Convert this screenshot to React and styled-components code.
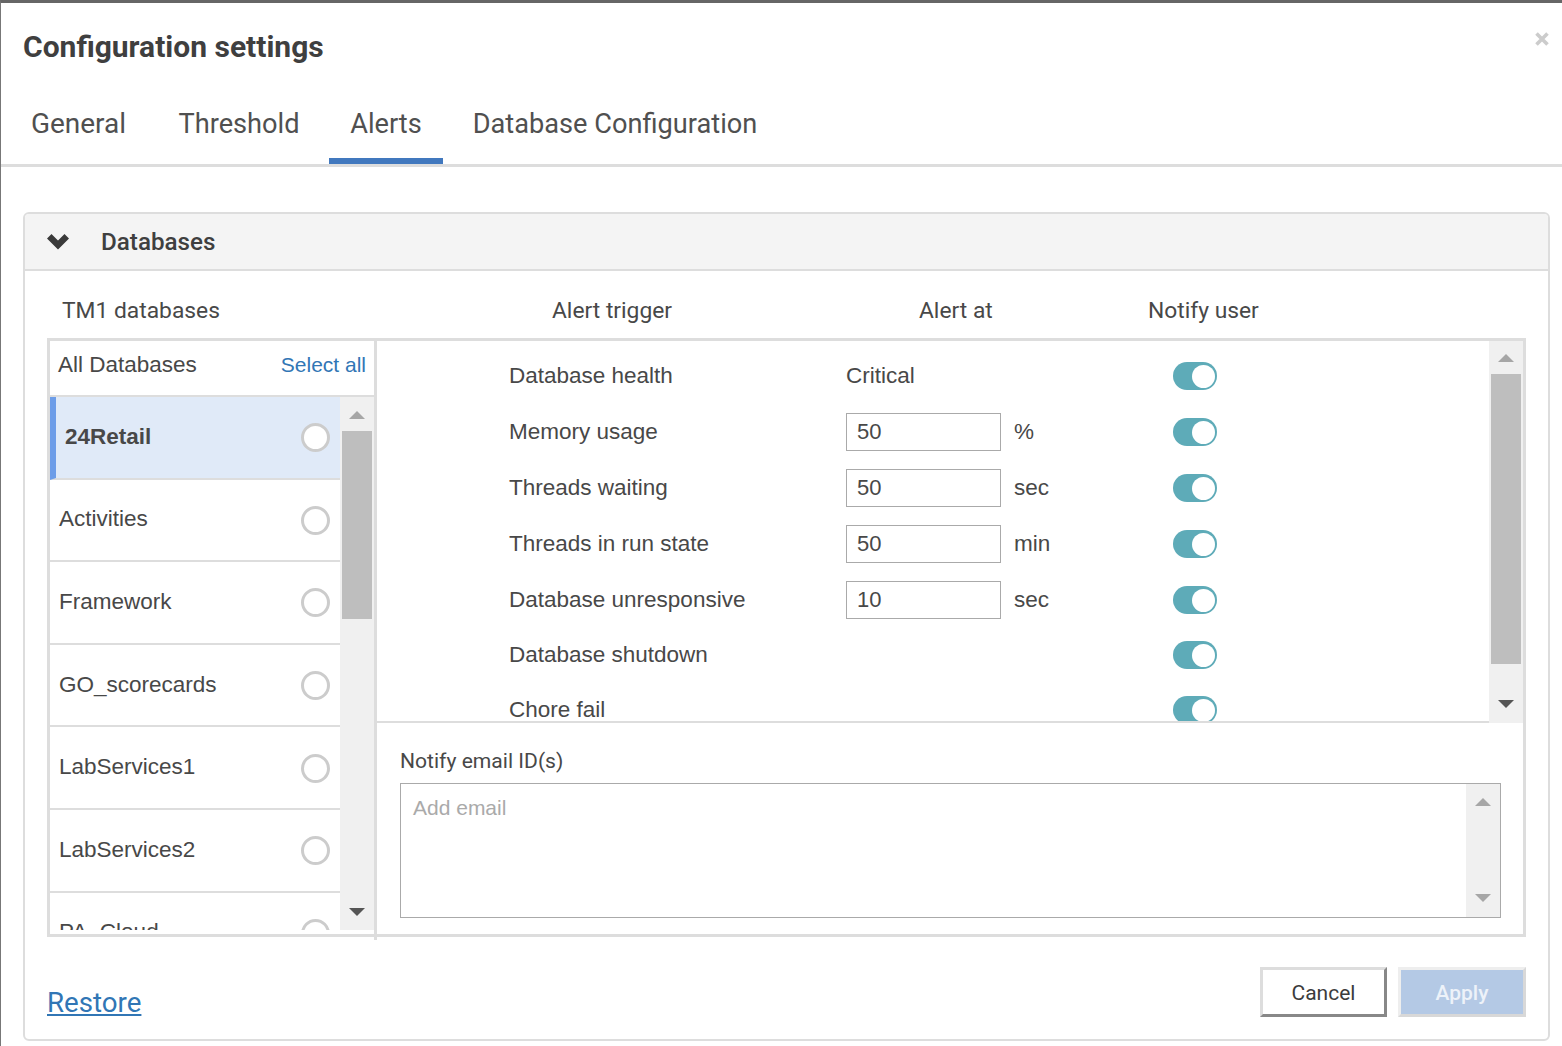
import React from 'react';
import styled, { createGlobalStyle } from 'styled-components';

const Global = createGlobalStyle`
  * { box-sizing: border-box; }
  html, body { margin: 0; padding: 0; background: #fff; overflow: hidden; }
  body { font-family: Roboto, "Liberation Sans", sans-serif; color: #444; }
`;

const Modal = styled.div`
  width: 1562px; height: 1046px; overflow: hidden; background: #fff;
  border-top: 3px solid #666; border-left: 1px solid #777;
`;
const TitleRow = styled.header`
  height: 87px; display: flex; justify-content: space-between; align-items: flex-start;
  padding: 25px 13px 0 22px;
`;
const Title = styled.h1`
  margin: 0; font-size: 30px; line-height: 38px; font-weight: 700; color: #3f3f3f;
`;
const CloseIcon = styled.svg`
  width: 14px; height: 14px; margin-top: 4px; display: block;
`;
const TabBar = styled.nav`
  height: 77px; display: flex; gap: 7px; padding-left: 7px; border-bottom: 3px solid #ddd;
`;
const Tab = styled.div`
  width: ${p => p.$w}px; height: 74px; text-align: center; white-space: nowrap;
  font-size: ${p => p.$size || 27.2}px; line-height: 68px; color: #505050;
  border-bottom: 6px solid ${p => (p.$active ? '#4178be' : 'transparent')};
`;
const Panel = styled.section`
  width: 1527px; height: 829px; margin: 45px 0 0 22px;
  border: 2px solid #ddd; border-radius: 6px; overflow: hidden;
`;
const PanelHead = styled.div`
  height: 57px; display: flex; align-items: center; gap: 32px; padding-left: 22px;
  background: #f4f4f4; border-bottom: 2px solid #ddd;
  font-size: 24.2px; font-weight: 500; color: #3f3f3f;
`;
const PanelBody = styled.div`
  padding: 0 22px;
`;
const ColumnHeads = styled.div`
  height: 67px; display: grid; grid-template-columns: 490px 367px 229px 1fr;
  padding: 26px 0 0 15px; font-size: 22.8px; line-height: 28px; color: #484848;
`;
const Box = styled.div`
  height: 599px; display: flex; border: 3px solid #ddd;
`;
const LeftCol = styled.div`
  width: 327px; height: 599px; flex: none; display: flex; flex-direction: column;
  border-right: 3px solid #ddd;
`;
const LeftHead = styled.div`
  height: 56px; flex: none; display: flex; justify-content: space-between; align-items: center;
  padding: 0 8px 6px; border-bottom: 2px solid #ddd;
  font-family: "Liberation Sans", Arial, sans-serif; font-size: 22.5px; color: #484848;
`;
const SelectAll = styled.a`
  font-size: 21px; color: #3176b5;
`;
const ListWrap = styled.div`
  height: 533px; flex: none; display: flex; overflow: hidden;
`;
const List = styled.div`
  flex: 1; overflow: hidden;
`;
const Item = styled.div`
  height: 82.6px; display: flex; justify-content: space-between; align-items: center;
  padding: 0 10.5px 1px 9px; border-bottom: 2px solid #ddd;
  border-left: ${p => (p.$active ? '6px solid #6d9de8' : '0 solid transparent')};
  background: ${p => (p.$active ? '#e0eaf8' : '#fff')};
  font-family: "Liberation Sans", Arial, sans-serif; font-size: 22.5px;
  font-weight: ${p => (p.$active ? 700 : 400)};
  color: #484848;
`;
const Radio = styled.span`
  width: 29px; height: 29px; flex: none; margin-top: 2px; border-radius: 50%;
  border: 3px solid #ccc; background: #fff;
`;
const Track = styled.div`
  width: 34px; flex: none; display: flex; flex-direction: column; align-items: center;
  background: #f0f0f0; padding: ${p => p.$top}px 0 ${p => p.$bottom}px;
`;
const Arrow = styled.svg`
  width: 16px; height: 8px; flex: none; display: block;
  margin-top: ${p => (p.$down ? 'auto' : '0')};
`;
const Thumb = styled.div`
  width: 30px; flex: none; background: #bebebe; margin-top: 12px;
  height: ${p => p.$h}px;
`;
const RightCol = styled.div`
  flex: 1; min-width: 0; display: flex; flex-direction: column;
`;
const AlertsArea = styled.div`
  height: 382px; flex: none; display: flex; overflow: hidden;
`;
const Rows = styled.div`
  flex: 1; height: 382px; overflow: hidden; padding-top: 7px; border-bottom: 2px solid #ddd;
`;
const Row = styled.div`
  height: ${p => (p.$short ? 54 : 56)}px; display: grid; align-items: center;
  grid-template-columns: 337px 155px 172px 44px; padding-left: 132px;
  font-family: "Liberation Sans", Arial, sans-serif; font-size: 22.5px; color: #484848;
`;
const ValueInput = styled.input`
  width: 155px; height: 38px; border: 1px solid #aaa; padding: 0 10px; margin: 0;
  font-family: "Liberation Sans", Arial, sans-serif; font-size: 22px; color: #484848;
  background: #fff; outline: none;
`;
const Unit = styled.span`
  margin-left: 13px;
`;
const Toggle = styled.span`
  width: 44px; height: 28px; border-radius: 14px; background: #5eabb8;
  display: flex; justify-content: flex-end; align-items: center; padding-right: 2.5px;
  &::after { content: ''; width: 23px; height: 23px; border-radius: 50%; background: #fff; }
`;
const NotifyArea = styled.div`
  flex: 1; padding: 0 22px 0 23px;
`;
const NotifyLabel = styled.div`
  height: 60px; padding-top: 25px; font-size: 21.1px; line-height: 26px; color: #484848;
`;
const EmailBox = styled.div`
  width: 1101px; height: 135px; display: flex; border: 1px solid #aaa;
`;
const Placeholder = styled.div`
  flex: 1; padding: 11px 12px; font-family: "Liberation Sans", Arial, sans-serif;
  font-size: 21px; line-height: 26px; color: #aaa;
`;
const Footer = styled.div`
  display: flex; justify-content: space-between; align-items: flex-start; padding-top: 30px;
`;
const Restore = styled.a`
  margin-top: 19px; font-size: 27.7px; line-height: 33px; color: #3176b5; text-decoration: underline;
`;
const Buttons = styled.div`
  display: flex; gap: 11px;
`;
const Button = styled.button`
  width: ${p => (p.$primary ? 128 : 127)}px; height: 50px; margin: 0; padding: 2px 0 0;
  font-family: Roboto, sans-serif; font-size: 21px;
  font-weight: ${p => (p.$primary ? 500 : 400)};
  background: ${p => (p.$primary ? '#b4c9e5' : '#fff')};
  color: ${p => (p.$primary ? '#edf2f9' : '#3c3c3c')};
  border-style: solid; border-width: 3px;
  border-color: ${p => (p.$primary ? '#eee #d8d8d8 #d8d8d8 #eee' : '#ddd #888 #888 #ddd')};
`;

const UpArrow = () => (
  <Arrow viewBox="0 0 16 8"><polygon points="8,0 16,8 0,8" fill="#a6a6a6" /></Arrow>
);
const DownArrow = ({ color = '#555' }) => (
  <Arrow $down viewBox="0 0 16 8"><polygon points="0,0 16,0 8,8" fill={color} /></Arrow>
);

const databases = ['24Retail', 'Activities', 'Framework', 'GO_scorecards', 'LabServices1', 'LabServices2', 'PA_Cloud'];
const alerts = [
  { label: 'Database health', text: 'Critical' },
  { label: 'Memory usage', value: '50', unit: '%' },
  { label: 'Threads waiting', value: '50', unit: 'sec' },
  { label: 'Threads in run state', value: '50', unit: 'min' },
  { label: 'Database unresponsive', value: '10', unit: 'sec' },
  { label: 'Database shutdown', short: true },
  { label: 'Chore fail' },
];

export default function App() {
  return (
    <Modal>
      <Global />
      <TitleRow>
        <Title>Configuration settings</Title>
        <CloseIcon viewBox="0 0 14 14">
          <path d="M1.5 1.5 L12.5 12.5 M12.5 1.5 L1.5 12.5" stroke="#ccc" strokeWidth="3.6" fill="none" />
        </CloseIcon>
      </TitleRow>
      <TabBar>
        <Tab $w={141} $size={28}>General</Tab>
        <Tab $w={166}>Threshold</Tab>
        <Tab $w={114} $active>Alerts</Tab>
        <Tab $w={330}>Database Configuration</Tab>
      </TabBar>
      <Panel>
        <PanelHead>
          <svg width="22" height="16" viewBox="0 0 22 16">
            <path d="M0 4.5 L4.5 0 L11 6.5 L17.5 0 L22 4.5 L11 15.5 Z" fill="#3a3a3a" />
          </svg>
          <span>Databases</span>
        </PanelHead>
        <PanelBody>
          <ColumnHeads>
            <span>TM1 databases</span>
            <span>Alert trigger</span>
            <span>Alert at</span>
            <span>Notify user</span>
          </ColumnHeads>
          <Box>
            <LeftCol>
              <LeftHead>
                <span>All Databases</span>
                <SelectAll>Select all</SelectAll>
              </LeftHead>
              <ListWrap>
                <List>
                  {databases.map((name, i) => (
                    <Item key={name} $active={i === 0}>
                      <span>{name}</span>
                      <Radio />
                    </Item>
                  ))}
                </List>
                <Track $top={14} $bottom={14}>
                  <UpArrow />
                  <Thumb $h={188} />
                  <DownArrow />
                </Track>
              </ListWrap>
            </LeftCol>
            <RightCol>
              <AlertsArea>
                <Rows>
                  {alerts.map(a => (
                    <Row key={a.label} $short={a.short}>
                      <span>{a.label}</span>
                      {a.value ? <ValueInput defaultValue={a.value} /> : <span>{a.text}</span>}
                      {a.unit ? <Unit>{a.unit}</Unit> : <span />}
                      <Toggle />
                    </Row>
                  ))}
                </Rows>
                <Track $top={13} $bottom={15}>
                  <UpArrow />
                  <Thumb $h={290} />
                  <DownArrow />
                </Track>
              </AlertsArea>
              <NotifyArea>
                <NotifyLabel>Notify email ID(s)</NotifyLabel>
                <EmailBox>
                  <Placeholder>Add email</Placeholder>
                  <Track $top={14} $bottom={15}>
                    <UpArrow />
                    <DownArrow color="#a6a6a6" />
                  </Track>
                </EmailBox>
              </NotifyArea>
            </RightCol>
          </Box>
          <Footer>
            <Restore>Restore</Restore>
            <Buttons>
              <Button>Cancel</Button>
              <Button $primary>Apply</Button>
            </Buttons>
          </Footer>
        </PanelBody>
      </Panel>
    </Modal>
  );
}
